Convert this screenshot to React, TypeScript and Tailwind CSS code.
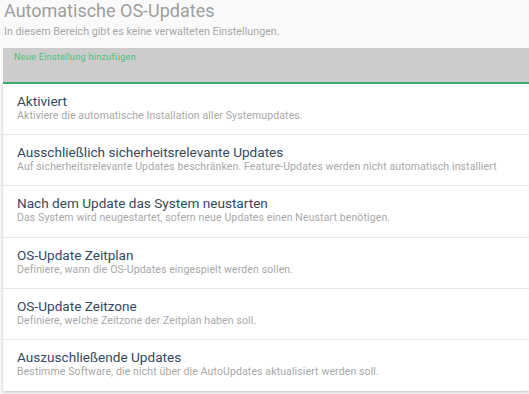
import React from "react";

const items = [
  ["Aktiviert", "Aktiviere die automatische Installation aller Systemupdates."],
  ["Ausschließlich sicherheitsrelevante Updates", "Auf sicherheitsrelevante Updates beschränken. Feature-Updates werden nicht automatisch installiert"],
  ["Nach dem Update das System neustarten", "Das System wird neugestartet, sofern neue Updates einen Neustart benötigen."],
  ["OS-Update Zeitplan", "Definiere, wann die OS-Updates eingespielt werden sollen."],
  ["OS-Update Zeitzone", "Definiere, welche Zeitzone der Zeitplan haben soll."],
  ["Auszuschließende Updates", "Bestimme Software, die nicht über die AutoUpdates aktualisiert werden soll."],
];

export default function App() {
  return (
    <div className="w-[529px] h-[394px] overflow-hidden bg-[#fafafa] font-['Roboto',sans-serif]">
      <div className="h-[48px] pl-[4px]">
        <div className="text-[18px] leading-[22px] text-[#9e9e9e]">Automatische OS-Updates</div>
        <div className="text-[10.75px] leading-[14px] mt-[3px] text-[#a8a8a8]">In diesem Bereich gibt es keine verwalteten Einstellungen.</div>
      </div>
      <div className="ml-[3px] h-[36px] bg-[#cccccc] border-b-2 border-[#3cb371] pl-[11px] pt-[3px]">
        <div className="text-[9px] leading-[12px] tracking-[0.3px] text-[#45c477]">Neue Einstellung hinzufügen</div>
      </div>
      <div className="ml-[3px] bg-white shadow-[0_1px_3px_rgba(0,0,0,0.25)]">
        {items.map(([t, d], i) => (
          <div key={i} className={`pl-[14px] ${i === 2 ? "h-[52px]" : "h-[51px]"} pt-[9px] whitespace-nowrap ${i < items.length - 1 ? "border-b border-[#e6e6e6]" : ""}`}>
            <div className="text-[13.6px] leading-[16px] text-[#34495e]">{t}</div>
            <div className="text-[10.5px] leading-[13px] tracking-[0.12px] text-[#a8a8a8]">{d}</div>
          </div>
        ))}
      </div>
    </div>
  );
}
